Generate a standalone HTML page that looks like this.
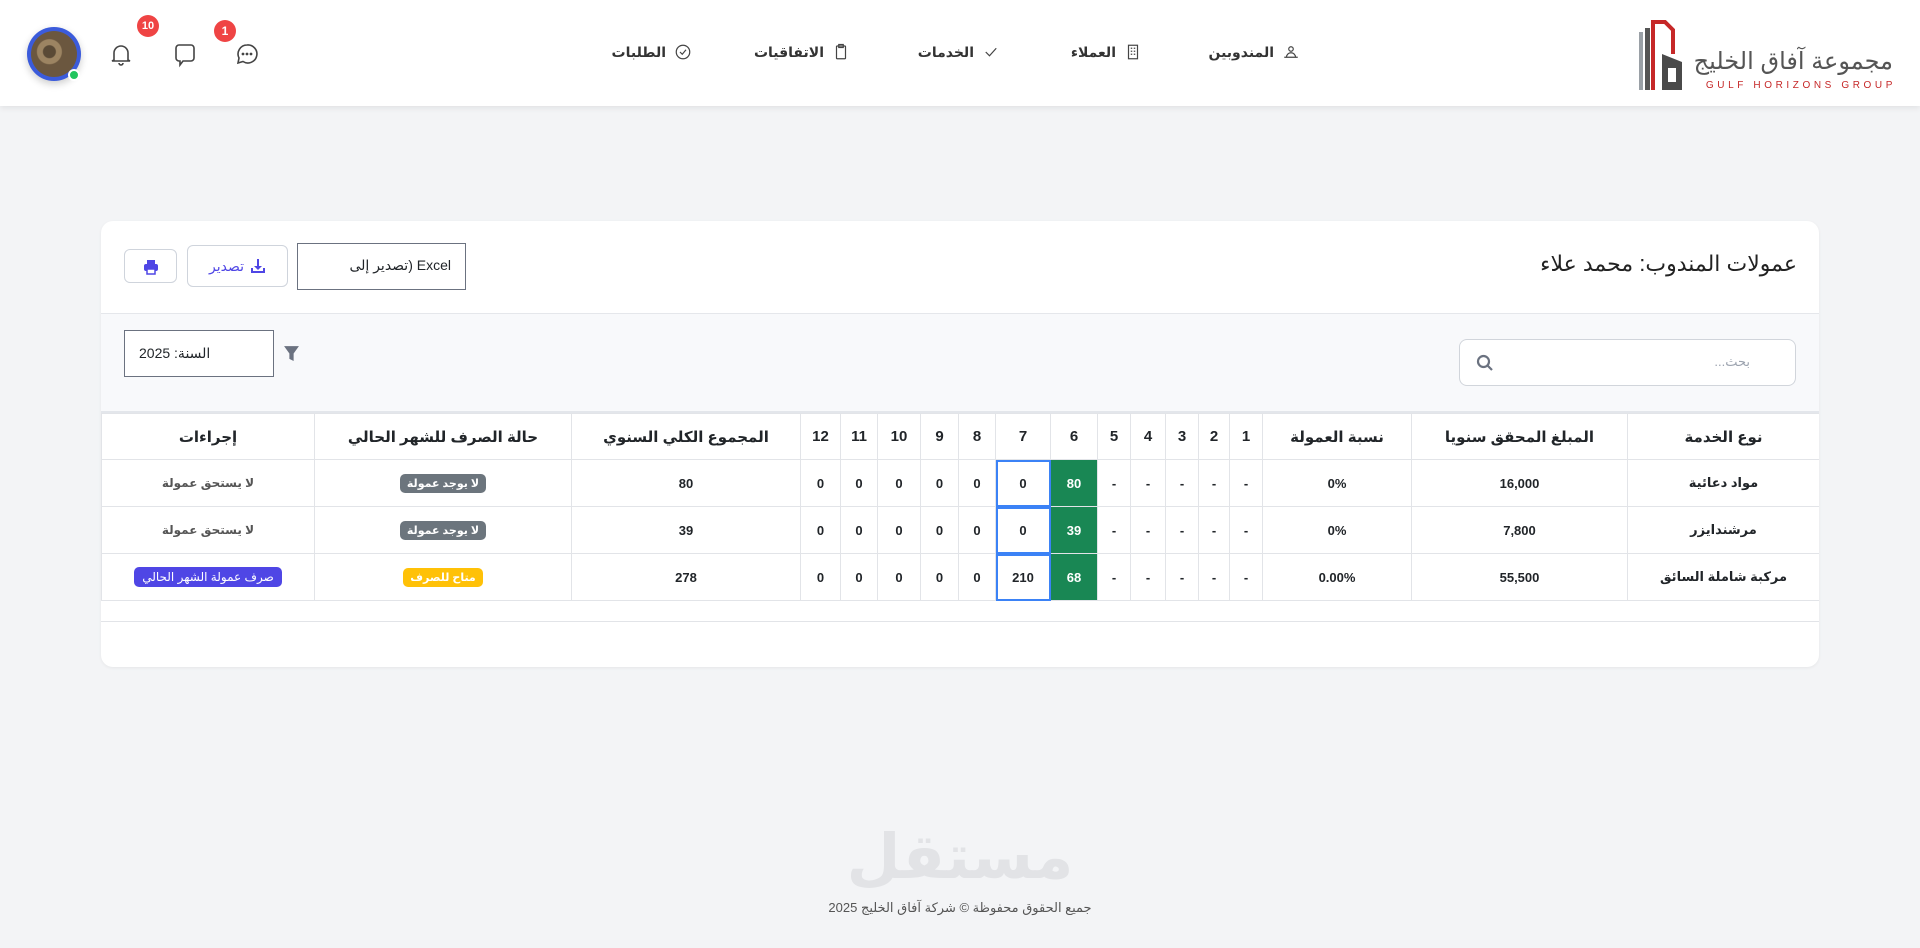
<!DOCTYPE html>
<html lang="ar" dir="rtl"><head><meta charset="utf-8">
<style>
*{box-sizing:border-box;margin:0;padding:0}
body{width:1920px;height:948px;background:#f3f4f6;font-family:"Liberation Sans","DejaVu Sans",sans-serif;color:#212529;position:relative;overflow:hidden}
.nav{position:absolute;top:0;left:0;width:1920px;height:106px;background:#fff;box-shadow:0 2px 6px rgba(0,0,0,.08)}
.ni{position:absolute;top:43px;font-size:14px;font-weight:bold;color:#333;display:flex;align-items:center;gap:8px;direction:rtl}
.ni svg{width:18px;height:18px;stroke:#444;fill:none;stroke-width:1.6}
.card{position:absolute;left:101px;top:221px;width:1718px;height:446px;background:#fff;border-radius:12px;box-shadow:0 1px 3px rgba(0,0,0,.06);overflow:hidden}
.title{position:absolute;right:22px;top:30px;font-size:22px;color:#222}
.filt{position:absolute;left:0;top:92px;width:1718px;height:100px;background:#f8f9fb;border-top:1px solid #e5e7eb;border-bottom:2px solid #e3e6eb}
table{position:absolute;left:0;top:192px;width:1718px;border-collapse:collapse;table-layout:fixed;font-size:13px}
th,td{border:1px solid #e2e4e8;text-align:center;font-weight:bold}
th{height:46px;font-size:15px}
td{height:47px}
td.g{background:#198754;color:#fff}
td.b{outline:2px solid #3b82f6;outline-offset:-2px}
.bd{display:inline-block;color:#fff;font-size:11px;padding:3px 7px;border-radius:5px}
.gr{background:#6c757d}.yl{background:#ffc107}.pu{background:#4f46e5;font-weight:normal;padding:3px 8px;font-size:12px}
.act{color:#555;font-size:12px}
</style></head><body>
<div class="nav">
  <div style="position:absolute;left:1636px;top:16px;width:260px;height:78px">
    <svg width="60" height="76" style="position:absolute;left:0;top:0">
      <rect x="3" y="16" width="4" height="58" fill="#9aa0a6"/><rect x="9" y="12" width="5" height="62" fill="#555"/>
      <path d="M17 74V6h12l8 8v24" stroke="#c62828" stroke-width="4" fill="none"/>
      <path d="M26 74V38l20 8v28z" fill="#4a4a4a"/><rect x="32" y="52" width="8" height="14" fill="#fff"/>
    </svg>
    <div style="position:absolute;right:3px;top:31px;font-size:24px;color:#555;direction:rtl;white-space:nowrap">مجموعة آفاق الخليج</div>
    <div style="position:absolute;right:0px;top:64px;font-size:10px;letter-spacing:3.6px;color:#c62828;direction:ltr;white-space:nowrap">GULF HORIZONS GROUP</div>
  </div>
  <div class="ni" style="right:620px">المندوبين<svg viewBox="0 0 24 24" style="order:-1"><circle cx="12" cy="8" r="3"/><path d="M6 19a6 6 0 0112 0M3 19h18"/></svg></div>
  <div class="ni" style="right:778px">العملاء<svg viewBox="0 0 24 24" style="order:-1"><rect x="6" y="3" width="12" height="18"/><path d="M9 7h2M13 7h2M9 11h2M13 11h2M9 15h2M13 15h2"/></svg></div>
  <div class="ni" style="right:920px">الخدمات<svg viewBox="0 0 24 24" style="order:-1"><path d="M5 12l5 5L19 7"/></svg></div>
  <div class="ni" style="right:1070px">الاتفاقيات<svg viewBox="0 0 24 24" style="order:-1"><rect x="6" y="4" width="12" height="17" rx="1"/><rect x="9" y="2" width="6" height="4"/></svg></div>
  <div class="ni" style="right:1228px">الطلبات<svg viewBox="0 0 24 24" style="order:-1"><circle cx="12" cy="12" r="9"/><path d="M8 12l3 3 5-6"/></svg></div>
  <svg style="position:absolute;left:235px;top:42px" width="24" height="24" viewBox="0 0 24 24" fill="none" stroke="#444" stroke-width="1.6"><path d="M12 3a9 9 0 00-8 13l-1 5 5-1.5A9 9 0 1012 3z"/><circle cx="8" cy="12" r=".6" fill="#444"/><circle cx="12" cy="12" r=".6" fill="#444"/><circle cx="16" cy="12" r=".6" fill="#444"/></svg>
  <div style="position:absolute;left:214px;top:20px;width:22px;height:22px;border-radius:50%;background:#ef4444;color:#fff;font-size:12px;font-weight:bold;text-align:center;line-height:22px">1</div>
  <svg style="position:absolute;left:173px;top:42px" width="24" height="26" viewBox="0 0 24 26" fill="none" stroke="#444" stroke-width="1.6"><path d="M6 3h12a3 3 0 013 3v10a3 3 0 01-3 3h-8l-3 4v-4H6a3 3 0 01-3-3V6a3 3 0 013-3z"/></svg>
  <div style="position:absolute;left:137px;top:15px;width:22px;height:22px;border-radius:50%;background:#ef4444;color:#fff;font-size:11px;font-weight:bold;text-align:center;line-height:22px">10</div>
  <svg style="position:absolute;left:110px;top:42px" width="22" height="24" viewBox="0 0 22 24" fill="none" stroke="#444" stroke-width="1.6"><path d="M4 18V11a7 7 0 0114 0v7l2 1H2zM9 21a2 2 0 004 0"/></svg>
  <div style="position:absolute;left:27px;top:27px;width:54px;height:54px;border-radius:50%;background:#3b5bdb;box-shadow:0 3px 8px rgba(0,0,0,.2)"><div style="margin:4px;width:46px;height:46px;border-radius:50%;background:radial-gradient(circle at 40% 45%,#5a4a36 0 6px,#9c8462 7px 12px,#6b573f 13px)"></div></div>
  <div style="position:absolute;left:68px;top:69px;width:12px;height:12px;border-radius:50%;background:#22c55e;border:2px solid #fff"></div>
</div>

<div class="card">
  <div class="title">عمولات المندوب: محمد علاء</div>
  <div style="position:absolute;left:23px;top:28px;width:53px;height:34px;border:1px solid #cfd4dc;border-radius:6px"><svg style="position:absolute;left:18px;top:9px" width="16" height="16" viewBox="0 0 16 16" fill="#4f46e5"><rect x="4" y="1" width="8" height="4"/><rect x="1" y="5" width="14" height="7" rx="2"/><rect x="4" y="10" width="8" height="5" fill="#fff" stroke="#4f46e5" stroke-width="1.5"/></svg></div>
  <div style="position:absolute;left:86px;top:24px;width:101px;height:42px;border:1px solid #cfd4dc;border-radius:6px;color:#4f46e5;font-size:14px;display:flex;align-items:center;justify-content:center;gap:6px">تصدير<svg width="16" height="16" viewBox="0 0 16 16" fill="#4f46e5" style="order:-1"><path d="M7 1h2v7h3l-4 4-4-4h3z"/><path d="M1 10h2v3h10v-3h2v5H1z"/></svg></div>
  <div style="position:absolute;left:196px;top:22px;width:169px;height:47px;border:1px solid #6b7280;font-size:14px;direction:rtl;text-align:right;padding:13px 14px 0 0;white-space:nowrap;overflow:hidden">‏Excel (تصدير إلى</div>
  <div class="filt">
    <div style="position:absolute;left:23px;top:16px;width:150px;height:47px;border:1px solid #6b7280;font-size:14px;direction:rtl;padding:14px 14px;text-align:left;background:#fff">السنة: 2025</div>
    <svg style="position:absolute;left:182px;top:31px" width="17" height="17" viewBox="0 0 16 16" fill="#6b7280"><path d="M1 1h14L10 8v7l-4-2V8z"/></svg>
    <div style="position:absolute;left:1358px;top:25px;width:337px;height:47px;border:1px solid #d1d5db;border-radius:8px;background:#fff">
      <span style="position:absolute;right:45px;top:14px;font-size:13px;color:#9ca3af">بحث...</span>
      <svg style="position:absolute;left:16px;top:14px" width="18" height="18" viewBox="0 0 18 18" fill="none" stroke="#6b7280" stroke-width="2.2"><circle cx="7.5" cy="7.5" r="5.5"/><path d="M11.5 11.5L16 16"/></svg>
    </div>
  </div>
  <table>
    <colgroup><col style="width:192px"><col style="width:216px"><col style="width:149px"><col style="width:33px"><col style="width:31px"><col style="width:33px"><col style="width:35px"><col style="width:33px"><col style="width:47px"><col style="width:55px"><col style="width:37px"><col style="width:38px"><col style="width:43px"><col style="width:37px"><col style="width:40px"><col style="width:229px"><col style="width:257px"><col style="width:213px"></colgroup>
    <tr><th>نوع الخدمة</th><th>المبلغ المحقق سنويا</th><th>نسبة العمولة</th><th>1</th><th>2</th><th>3</th><th>4</th><th>5</th><th>6</th><th>7</th><th>8</th><th>9</th><th>10</th><th>11</th><th>12</th><th>المجموع الكلي السنوي</th><th>حالة الصرف للشهر الحالي</th><th>إجراءات</th></tr>
    <tr><td>مواد دعائية</td><td>16,000</td><td>0%</td><td>-</td><td>-</td><td>-</td><td>-</td><td>-</td><td class="g">80</td><td class="b">0</td><td>0</td><td>0</td><td>0</td><td>0</td><td>0</td><td>80</td><td><span class="bd gr">لا يوجد عمولة</span></td><td class="act">لا يستحق عمولة</td></tr>
    <tr><td>مرشندايزر</td><td>7,800</td><td>0%</td><td>-</td><td>-</td><td>-</td><td>-</td><td>-</td><td class="g">39</td><td class="b">0</td><td>0</td><td>0</td><td>0</td><td>0</td><td>0</td><td>39</td><td><span class="bd gr">لا يوجد عمولة</span></td><td class="act">لا يستحق عمولة</td></tr>
    <tr><td>مركبة شاملة السائق</td><td>55,500</td><td>0.00%</td><td>-</td><td>-</td><td>-</td><td>-</td><td>-</td><td class="g">68</td><td class="b">210</td><td>0</td><td>0</td><td>0</td><td>0</td><td>0</td><td>278</td><td><span class="bd yl">متاح للصرف</span></td><td><span class="bd pu">صرف عمولة الشهر الحالي</span></td></tr>
  </table>
  <div style="position:absolute;left:0;top:400px;width:1718px;border-top:1px solid #e2e4e8"></div>
</div>

<div style="position:absolute;left:0;width:1920px;top:820px;text-align:center;font-size:62px;font-weight:bold;color:#e2e3e6">مستقل</div>
<div style="position:absolute;left:0;width:1920px;top:900px;text-align:center;font-size:13px;color:#555">جميع الحقوق محفوظة © شركة آفاق الخليج 2025</div>
</body></html>
